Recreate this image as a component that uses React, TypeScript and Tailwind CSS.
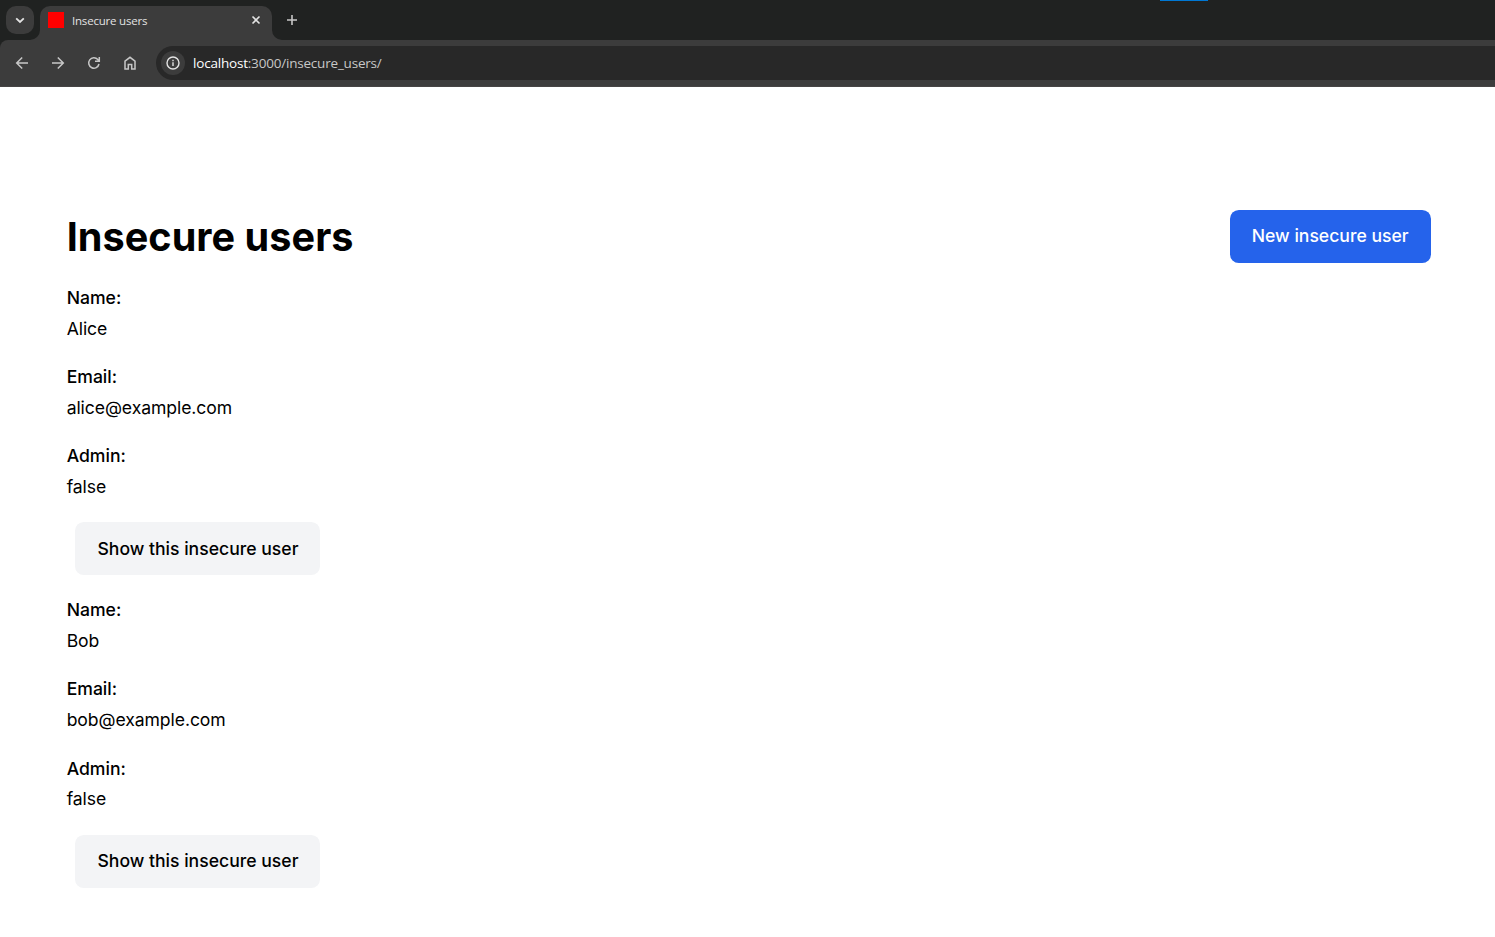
import React from "react";

type User = { name: string; email: string; admin: boolean };

const users: User[] = [
  { name: "Alice", email: "alice@example.com", admin: false },
  { name: "Bob", email: "bob@example.com", admin: false },
];

function Icon({ d, size = 18, width = 1.5 }: { d: string; size?: number; width?: number }) {
  return (
    <svg width={size} height={size} viewBox={`0 0 ${size} ${size}`} fill="none" stroke="currentColor" strokeWidth={width} className="block shrink-0">
      <path d={d} />
    </svg>
  );
}

function TabStrip() {
  return (
    <div className="relative flex h-10 items-start bg-[#202221] pl-1.5 pt-1.5">
      <div className="absolute left-[1160px] top-0 h-px w-12 bg-[#0078d4]" />
      <button className="flex size-7 items-center justify-center rounded-[10px] bg-[#3c3c3c] text-[#e3e3e3]">
        <Icon d="M5.2 7.3 9 11l3.8-3.7" width={1.8} />
      </button>
      <div className="relative ml-1.5 flex h-[34px] w-[232px] items-start rounded-t-[10px] bg-[#3c3c3c] pl-2 pt-1.5">
        <svg className="absolute -left-2.5 bottom-0" width="10" height="10" viewBox="0 0 10 10" fill="#3c3c3c">
          <path d="M10 0v10H0A10 10 0 0 0 10 0Z" />
        </svg>
        <svg className="absolute -right-2.5 bottom-0" width="10" height="10" viewBox="0 0 10 10" fill="#3c3c3c">
          <path d="M0 0v10h10A10 10 0 0 1 0 0Z" />
        </svg>
        <div className="size-4 bg-[#ff0000]" />
        <span className="ml-2 w-[175px] whitespace-nowrap font-['Open_Sans',sans-serif] text-[11.5px] leading-[17px] tracking-[-0.2px] text-[#e3e3e3]">
          Insecure users
        </span>
        <div className="text-[#e3e3e3]">
          <Icon d="M5.5 4.5l7 7M12.5 4.5l-7 7" size={18} width={1.6} />
        </div>
      </div>
      <div className="ml-[11px] mt-[5px] text-[#c7c7c7]">
        <Icon d="M9 4v10M4 9h10" width={1.6} />
      </div>
    </div>
  );
}

function Toolbar() {
  return (
    <div className="bg-[#202221]">
      <div className="flex h-[47px] items-start rounded-tl-[8px] border-b border-[#464444] bg-[#3c3c3c] pl-[13px] pt-1.5">
        <div className="flex h-[34px] items-center gap-[18px] text-[#c7c7c7]">
          <Icon d="M15 9H4M9.2 3.5 3.7 9l5.5 5.5" />
          <Icon d="M3 9h11M8.8 3.5 14.3 9l-5.5 5.5" />
          <Icon d="M14 10A5.2 5.2 0 1 1 12.8 5.5L14.2 7M14.3 3v4.3H10" />
          <Icon d="M4 7.2 9 3.3l5 3.9V15h-3.3v-4.6H7.3V15H4Z" />
        </div>
        <div className="ml-[17px] flex h-[34px] flex-1 items-center rounded-l-full bg-[#282828] pl-[5px]">
          <div className="flex size-6 items-center justify-center rounded-full bg-[#3c3c3c] text-[#e3e3e3]">
            <svg width="14" height="14" viewBox="0 0 14 14" fill="none" stroke="currentColor" strokeWidth="1.4">
              <circle cx="7" cy="7" r="6" />
              <path d="M7 6.3V10M7 3.8v1.4" />
            </svg>
          </div>
          <div className="ml-2 whitespace-nowrap font-['Open_Sans',sans-serif] text-[13.5px] leading-5 tracking-[-0.2px] text-[#c7c7c7]">
            <span className="text-white">localhost</span>:3000/insecure_users/
          </div>
        </div>
      </div>
    </div>
  );
}

function Field({ label, value }: { label: string; value: string }) {
  return (
    <div className="mb-[22px]">
      <strong className="mb-[4.4px] block font-medium">{label}:</strong>
      <p className="tracking-[-0.08px]">{value}</p>
    </div>
  );
}

export default function App() {
  return (
    <div className="h-[937px] w-[1495px] overflow-hidden bg-white">
      <TabStrip />
      <Toolbar />
      <main className="ml-[66.65px] w-[1364px] pt-[123.05px] font-['Inter',sans-serif] text-[17.6px] leading-[26.4px] text-black">
        <header className="mb-[22px] flex items-center justify-between">
          <h1 className="pt-px text-[39.6px] font-bold leading-[44px] tracking-[0.05px]">Insecure users</h1>
          <a className="rounded-[8.8px] bg-[#2563eb] px-[22px] py-[13.2px] font-medium text-white">New insecure user</a>
        </header>
        {users.map((user) => (
          <section key={user.name} className="mb-[22px]">
            <Field label="Name" value={user.name} />
            <Field label="Email" value={user.email} />
            <Field label="Admin" value={String(user.admin)} />
            <div className="flex">
              <a className="ml-[8.8px] rounded-[8.8px] bg-[#f3f4f6] px-[22px] py-[13.2px] font-medium">
                Show this insecure user
              </a>
            </div>
          </section>
        ))}
      </main>
    </div>
  );
}
